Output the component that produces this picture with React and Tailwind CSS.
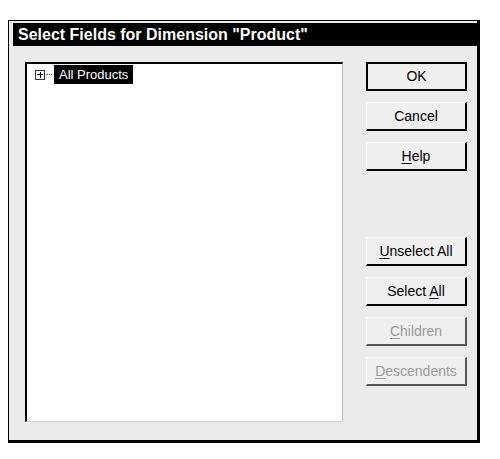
import React from 'react';

const BUTTONS = [
  { id: 'ok', label: 'OK', isDefault: true },
  { id: 'cancel', label: 'Cancel' },
  { id: 'help', label: 'Help', key: 'H' },
  { id: 'gap' },
  { id: 'unselect', label: 'Unselect All', key: 'U' },
  { id: 'select', label: 'Select All', key: 'A', keyAt: 7 },
  { id: 'children', label: 'Children', key: 'C', disabled: true },
  { id: 'desc', label: 'Descendents', key: 'D', disabled: true },
];

function Label({ label, keyAt = 0, hasKey }) {
  if (!hasKey) return <span>{label}</span>;
  return (
    <span>
      {label.slice(0, keyAt)}
      <span className="underline underline-offset-2">{label[keyAt]}</span>
      {label.slice(keyAt + 1)}
    </span>
  );
}

function DialogButton({ btn }) {
  const base = 'w-[101px] h-[29px] flex items-center justify-center text-[14px] bg-[#efefef]';
  if (btn.isDefault) {
    return (
      <button className={`${base} border-2 border-black text-black`}>
        <Label label={btn.label} />
      </button>
    );
  }
  return (
    <button
      className={`${base} border-t border-l border-white border-r-2 border-b-2 ${
        btn.disabled ? 'border-r-[#555] border-b-[#555] text-[#9a9a9a]' : 'border-r-black border-b-black text-black'
      }`}
    >
      <Label label={btn.label} keyAt={btn.keyAt} hasKey={!!btn.key} />
    </button>
  );
}

export default function App() {
  return (
    <div className="w-[500px] h-[459px] bg-white pl-[8px] pt-[20px]" style={{ fontFamily: '"Liberation Sans", Arial, sans-serif' }}>
      <div className="w-[472px] h-[423px] bg-[#ebebeb] border-t border-l border-black border-r-[3px] border-b-[3px] flex flex-col">
        {/* TITLE */}
        <div className="mt-[2px] ml-[4px] h-[23px] bg-black flex items-center pl-[5px]">
          <span className="text-white font-bold text-[16px] leading-none">Select Fields for Dimension "Product"</span>
        </div>

        {/* BODY */}
        <div className="flex pl-[16px] pt-[16px]">
          <div className="w-[318px] h-[360px] bg-white border-t-2 border-l-2 border-black border-r border-b border-r-[#bdbdbd] border-b-[#d0d0d0] pl-[8px] pt-[1px]">
            <div className="flex items-center h-[19px]">
              <div className="w-[10px] h-[10px] border border-[#333] bg-white relative shrink-0">
                <div className="absolute left-[1px] right-[1px] top-[3.5px] h-px bg-black" />
                <div className="absolute top-[1px] bottom-[1px] left-[3.5px] w-px bg-black" />
              </div>
              <div className="w-[6px] border-t border-dotted border-[#666] ml-[1px] mr-[2px]" />
              <div className="bg-black text-white text-[13px] h-[19px] px-[5px] flex items-center">All Products</div>
            </div>
          </div>

          <div className="ml-[23px] flex flex-col">
            {BUTTONS.map((btn) =>
              btn.id === 'gap' ? (
                <div key={btn.id} className="h-[55px]" />
              ) : (
                <div key={btn.id} className="mb-[11px]">
                  <DialogButton btn={btn} />
                </div>
              )
            )}
          </div>
        </div>
      </div>
    </div>
  );
}
